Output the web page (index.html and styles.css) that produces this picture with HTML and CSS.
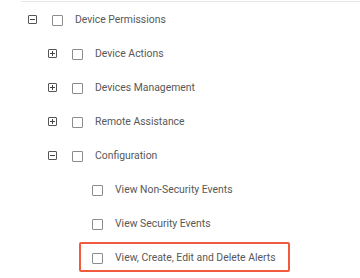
FILE: index.html
```html
<!DOCTYPE html>
<html>
<head>
<meta charset="utf-8">
<link rel="stylesheet" href="styles.css">
</head>
<body>
<div class="tree">
  <div class="row lvl0">
    <span class="exp minus"></span><span class="cb"></span><span class="label">Device Permissions</span>
  </div>
  <div class="row lvl1">
    <span class="exp plus"></span><span class="cb"></span><span class="label">Device Actions</span>
  </div>
  <div class="row lvl1">
    <span class="exp plus"></span><span class="cb"></span><span class="label">Devices Management</span>
  </div>
  <div class="row lvl1">
    <span class="exp plus"></span><span class="cb"></span><span class="label">Remote Assistance</span>
  </div>
  <div class="row lvl1">
    <span class="exp minus"></span><span class="cb"></span><span class="label">Configuration</span>
  </div>
  <div class="row lvl2">
    <span class="spacer"></span><span class="cb"></span><span class="label">View Non-Security Events</span>
  </div>
  <div class="row lvl2">
    <span class="spacer"></span><span class="cb"></span><span class="label">View Security Events</span>
  </div>
  <div class="row lvl2">
    <span class="spacer"></span>
    <span class="highlight"><span class="cb"></span><span class="label">View, Create, Edit and Delete Alerts</span></span>
  </div>
</div>
</body>
</html>
```

FILE: styles.css
```css
html, body {
  margin: 0;
  padding: 0;
  background: #fff;
}
body {
  font-family: Roboto, "Liberation Sans", sans-serif;
  font-size: 10.4px;
  color: #585858;
}
.tree {
  margin-left: 21px;
  margin-top: 1px;
  border-top: 1px solid #e6e6e6;
}
.row {
  display: flex;
  align-items: center;
  height: 34px;
}
.lvl0 { padding-left: 7px; }
.lvl1 { padding-left: 27px; }
.lvl2 { padding-left: 47px; }
.exp {
  position: relative;
  box-sizing: border-box;
  width: 9px;
  height: 9px;
  border: 1px solid #555;
  border-radius: 1px;
  margin-right: 15px;
  flex: none;
}
.exp::before, .exp.plus::after {
  content: "";
  position: absolute;
  background: #444;
}
.exp::before {
  left: 1px; right: 1px;
  top: 3px; height: 1px;
}
.exp.plus::after {
  top: 1px; bottom: 1px;
  left: 3px; width: 1px;
}
.spacer {
  width: 24px;
  flex: none;
}
.cb {
  box-sizing: border-box;
  width: 11px;
  height: 11px;
  border: 1px solid #8c8c8c;
  border-radius: 1px;
  margin-right: 12px;
  margin-top: 2px;
  flex: none;
}
.label {
  white-space: nowrap;
}
.highlight {
  display: flex;
  align-items: center;
  box-sizing: border-box;
  height: 30px;
  margin-left: -13px;
  padding: 0 12px 0 11px;
  border: 2px solid #f15a3d;
  border-radius: 2px;
}
```
